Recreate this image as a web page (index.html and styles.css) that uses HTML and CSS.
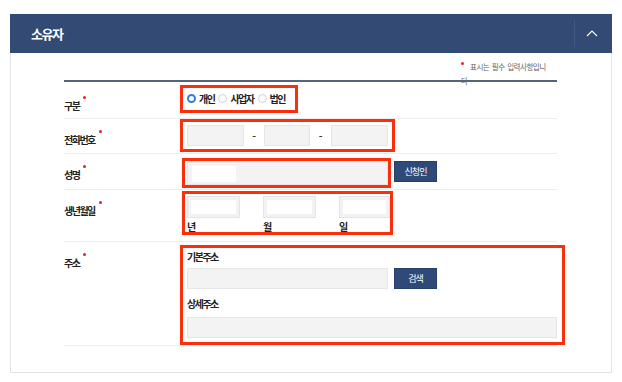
FILE: index.html
```html
<!DOCTYPE html>
<html lang="ko">
<head>
<meta charset="utf-8">
<title>소유자</title>
<link rel="stylesheet" href="styles.css">
</head>
<body>
<section class="panel">
  <header class="panel-head">
    <h2 class="panel-title">소유자</h2>
    <span class="toggle">
      <svg width="12" height="7" viewBox="0 0 12 7"><polyline points="1,6 6,1 11,6" fill="none" stroke="#ffffff" stroke-width="1.1"/></svg>
    </span>
  </header>
  <div class="panel-body">
    <p class="note"><span class="note-dot"></span>표시는 필수 입력사항입니다</p>
    <div class="form">
      <div class="row row-type">
        <div class="label label-first">구분<span class="req"></span></div>
        <div class="value">
          <div class="mark radios">
            <span class="radio"><span class="circle checked"></span>개인</span>
            <span class="radio"><span class="circle"></span>사업자</span>
            <span class="radio"><span class="circle"></span>법인</span>
          </div>
        </div>
      </div>
      <div class="row row-phone">
        <div class="label">전화번호<span class="req"></span></div>
        <div class="value">
          <div class="mark phone">
            <input class="field f57" type="text">
            <span class="dash">-</span>
            <input class="field f46" type="text">
            <span class="dash dash-b">-</span>
            <input class="field f57" type="text">
          </div>
        </div>
      </div>
      <div class="row row-name">
        <div class="label">성명<span class="req"></span></div>
        <div class="value value-name">
          <div class="mark name">
            <div class="field name-field"><span class="name-fill"></span></div>
          </div>
          <button class="btn btn-name" type="button">신청인</button>
        </div>
      </div>
      <div class="row row-birth">
        <div class="label">생년월일<span class="req"></span></div>
        <div class="value">
          <div class="mark birth">
            <div class="birth-col"><input class="field birth-field w53" type="text"><span class="unit">년</span></div>
            <div class="birth-col"><input class="field birth-field w53" type="text"><span class="unit">월</span></div>
            <div class="birth-col"><input class="field birth-field w51" type="text"><span class="unit">일</span></div>
          </div>
        </div>
      </div>
      <div class="row row-addr">
        <div class="label">주소<span class="req"></span></div>
        <div class="value">
          <div class="mark addr">
            <div class="sub">기본주소</div>
            <div class="addr-line">
              <input class="field f201" type="text">
              <button class="btn" type="button">검색</button>
            </div>
            <div class="sub sub-2">상세주소</div>
            <input class="field full" type="text">
          </div>
        </div>
      </div>
    </div>
  </div>
</section>
</body>
</html>
```
FILE: styles.css
```css
* { box-sizing: border-box; }
body {
  margin: 0;
  background: #ffffff;
  font-family: "Noto Sans CJK KR", "Noto Sans", sans-serif;
  color: #222;
}
.panel {
  margin: 14px 0 0 10px;
  width: 602px;
}
.panel-head {
  height: 39px;
  background: #324a74;
  display: flex;
  align-items: center;
  justify-content: space-between;
}
.panel-title {
  margin: 0;
  padding-left: 21px;
  font-size: 13px;
  font-weight: 700;
  letter-spacing: -1.5px;
  color: #ffffff;
  line-height: 16px;
}
.toggle {
  width: 34px;
  height: 27px;
  margin-right: 4px;
  border-left: 1px solid #44597d;
  display: flex;
  align-items: center;
  justify-content: center;
}
.panel-body {
  border: 1px solid #e3e3e3;
  border-top: 0;
  padding: 7px 54px 26px 53px;
}
.note {
  margin: 0 6px 0 auto;
  width: 90px;
  height: 20px;
  font-size: 7.5px;
  line-height: 14px;
  letter-spacing: -0.5px;
  word-spacing: 1px;
  color: #666;
  word-break: break-all;
}
.note-dot {
  display: inline-block;
  width: 3px;
  height: 3px;
  border-radius: 50%;
  background: #e8202a;
  vertical-align: 5px;
  margin-right: 6px;
}
.form {
  border-top: 2px solid #56647a;
}
.row {
  display: flex;
  border-bottom: 1px solid #ececec;
}
.label {
  width: 116px;
  flex: none;
  padding-top: 11px;
  font-size: 10px;
  line-height: 14px;
  font-weight: 700;
  letter-spacing: -1.5px;
  color: #222;
}
.label-first { padding-top: 14px; }
.req {
  display: inline-block;
  width: 3px;
  height: 3px;
  border-radius: 50%;
  background: #e8202a;
  margin-left: 4px;
  vertical-align: 11px;
}
.value { flex: 1; }
.mark {
  border: 3px solid #fb2f0c;
}
.row-type .value { padding: 2px 0 5px; }
.row-phone .value { padding: 0 0 1px; }
.row-name .value { padding: 4px 0 1px 2px; display: flex; align-items: flex-start; }
.row-birth .value { padding: 1px 0 6px 2px; }
.row-addr .value { padding: 3px 0 0; }

.radios {
  display: inline-flex;
  align-items: center;
  height: 28px;
  padding: 0 10px 0 4px;
  font-size: 10px;
  font-weight: 700;
  letter-spacing: -1.5px;
  color: #222;
}
.radio {
  display: inline-flex;
  align-items: center;
  margin-right: 4px;
}
.radio:last-child { margin-right: 0; }
.circle {
  width: 9px;
  height: 9px;
  border-radius: 50%;
  border: 1px solid #d4d4d4;
  background: #fafafa;
  margin-right: 3px;
}
.circle.checked {
  border: 2.5px solid #2d7fe0;
  background: #ffffff;
}

.field {
  display: block;
  margin: 0;
  padding: 0;
  height: 21px;
  background: #f3f3f3;
  border: 1px solid #e6e6e6;
  font: inherit;
  outline: none;
}
.phone {
  display: flex;
  align-items: center;
  width: 215px;
  height: 33px;
  padding: 0 4px;
}
.f57 { width: 57px; }
.f46 { width: 46px; }
.dash {
  width: 20px;
  text-align: center;
  font-size: 10px;
  font-weight: 700;
  color: #333;
}
.dash-b { width: 21px; }

.name {
  width: 209px;
  height: 30px;
  padding-left: 2px;
}
.name-field {
  width: 201px;
  height: 24px;
  padding: 4px;
}
.name-fill {
  display: block;
  width: 44px;
  height: 16px;
  background: #ffffff;
}
.btn {
  flex: none;
  width: 43px;
  height: 21px;
  margin: 0;
  padding: 0;
  background: #2f4a78;
  border: 1px solid #25406a;
  color: #ffffff;
  font-family: inherit;
  font-size: 9px;
  letter-spacing: -1px;
  line-height: 19px;
}
.btn-name { margin: 3px 0 0 3px; }

.birth {
  display: flex;
  gap: 23px;
  width: 211px;
  padding: 2px 0 0 2px;
}
.birth-col { display: flex; flex-direction: column; }
.birth-field {
  height: 22px;
  background: #ffffff;
  border: 1px solid #e4e4e4;
  box-shadow: inset 0 0 0 3px #f2f2f2;
}
.w53 { width: 53px; }
.w51 { width: 51px; }
.unit {
  margin-top: 3px;
  font-size: 10px;
  line-height: 11px;
  font-weight: 700;
  color: #222;
}

.addr {
  width: 385px;
  height: 100px;
  padding: 2px 5px 4px 4px;
}
.sub {
  font-size: 10px;
  line-height: 14px;
  font-weight: 700;
  letter-spacing: -1.5px;
  color: #222;
}
.sub-2 { margin-top: 8px; }
.addr-line {
  display: flex;
  margin-top: 4px;
}
.f201 { width: 201px; }
.addr-line .btn { margin-left: 6px; }
.full { width: 100%; margin-top: 6px; }
```
